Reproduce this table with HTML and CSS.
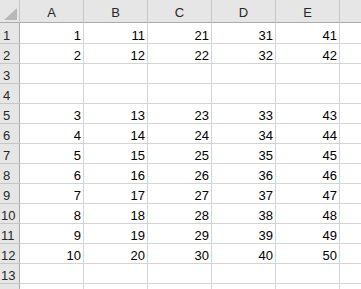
FILE: index.html
```html
<!DOCTYPE html>
<html>
<head>
<meta charset="utf-8">
<link rel="stylesheet" href="styles.css">
</head>
<body>
<div class="sheet">
  <div class="corner"><svg class="tri" width="19" height="22" viewBox="0 0 19 22"><polygon points="4,20 17,20 17,8" fill="#b8b8b8"/></svg></div>
  <div class="colhead">A</div><div class="colhead">B</div><div class="colhead">C</div><div class="colhead">D</div><div class="colhead">E</div><div class="colhead last"></div>

  <div class="rowhead">1</div><div class="cell">1</div><div class="cell">11</div><div class="cell">21</div><div class="cell">31</div><div class="cell">41</div><div class="cell last"></div>
  <div class="rowhead">2</div><div class="cell">2</div><div class="cell">12</div><div class="cell">22</div><div class="cell">32</div><div class="cell">42</div><div class="cell last"></div>
  <div class="rowhead">3</div><div class="cell"></div><div class="cell"></div><div class="cell"></div><div class="cell"></div><div class="cell"></div><div class="cell last"></div>
  <div class="rowhead">4</div><div class="cell"></div><div class="cell"></div><div class="cell"></div><div class="cell"></div><div class="cell"></div><div class="cell last"></div>
  <div class="rowhead">5</div><div class="cell">3</div><div class="cell">13</div><div class="cell">23</div><div class="cell">33</div><div class="cell">43</div><div class="cell last"></div>
  <div class="rowhead">6</div><div class="cell">4</div><div class="cell">14</div><div class="cell">24</div><div class="cell">34</div><div class="cell">44</div><div class="cell last"></div>
  <div class="rowhead">7</div><div class="cell">5</div><div class="cell">15</div><div class="cell">25</div><div class="cell">35</div><div class="cell">45</div><div class="cell last"></div>
  <div class="rowhead">8</div><div class="cell">6</div><div class="cell">16</div><div class="cell">26</div><div class="cell">36</div><div class="cell">46</div><div class="cell last"></div>
  <div class="rowhead">9</div><div class="cell">7</div><div class="cell">17</div><div class="cell">27</div><div class="cell">37</div><div class="cell">47</div><div class="cell last"></div>
  <div class="rowhead">10</div><div class="cell">8</div><div class="cell">18</div><div class="cell">28</div><div class="cell">38</div><div class="cell">48</div><div class="cell last"></div>
  <div class="rowhead">11</div><div class="cell">9</div><div class="cell">19</div><div class="cell">29</div><div class="cell">39</div><div class="cell">49</div><div class="cell last"></div>
  <div class="rowhead">12</div><div class="cell">10</div><div class="cell">20</div><div class="cell">30</div><div class="cell">40</div><div class="cell">50</div><div class="cell last"></div>
  <div class="rowhead">13</div><div class="cell"></div><div class="cell"></div><div class="cell"></div><div class="cell"></div><div class="cell"></div><div class="cell last"></div>
  <div class="rowhead"></div><div class="cell"></div><div class="cell"></div><div class="cell"></div><div class="cell"></div><div class="cell"></div><div class="cell last"></div>
</div>
</body>
</html>
```

FILE: styles.css
```css
html, body {
  margin: 0;
  padding: 0;
  background: #ffffff;
  overflow: hidden;
}

.sheet {
  display: grid;
  grid-template-columns: 20px repeat(5, 64px) 1fr;
  grid-template-rows: 23px 21px;
  grid-auto-rows: 20px;
  font-family: "Liberation Sans", Arial, sans-serif;
  font-size: 13px;
  line-height: 15px;
  color: #000;
  width: 361px;
}

.sheet > div {
  box-sizing: border-box;
  border-right: 1px solid #d4d4d4;
  border-bottom: 1px solid #d4d4d4;
  display: flex;
  align-items: flex-end;
  overflow: hidden;
  white-space: nowrap;
}

.sheet > .corner {
  background: #e6e6e6;
  border-right: 1px solid #c6c6c6;
  border-bottom: 1px solid #ababab;
}

.tri {
  display: block;
  align-self: flex-start;
}

.sheet > .colhead {
  background: #e6e6e6;
  color: #262626;
  justify-content: center;
  padding-bottom: 2px;
  border-right: 1px solid #c6c6c6;
  border-bottom: 1px solid #ababab;
}

.sheet > .rowhead {
  background: #e6e6e6;
  color: #262626;
  justify-content: safe center;
  padding-left: 1px;
  padding-right: 7px;
  border-right: 1px solid #ababab;
  border-bottom: 1px solid #c6c6c6;
}

.sheet > .cell {
  justify-content: flex-end;
  padding-right: 2px;
}

.sheet > .last {
  border-right: none;
}
```
